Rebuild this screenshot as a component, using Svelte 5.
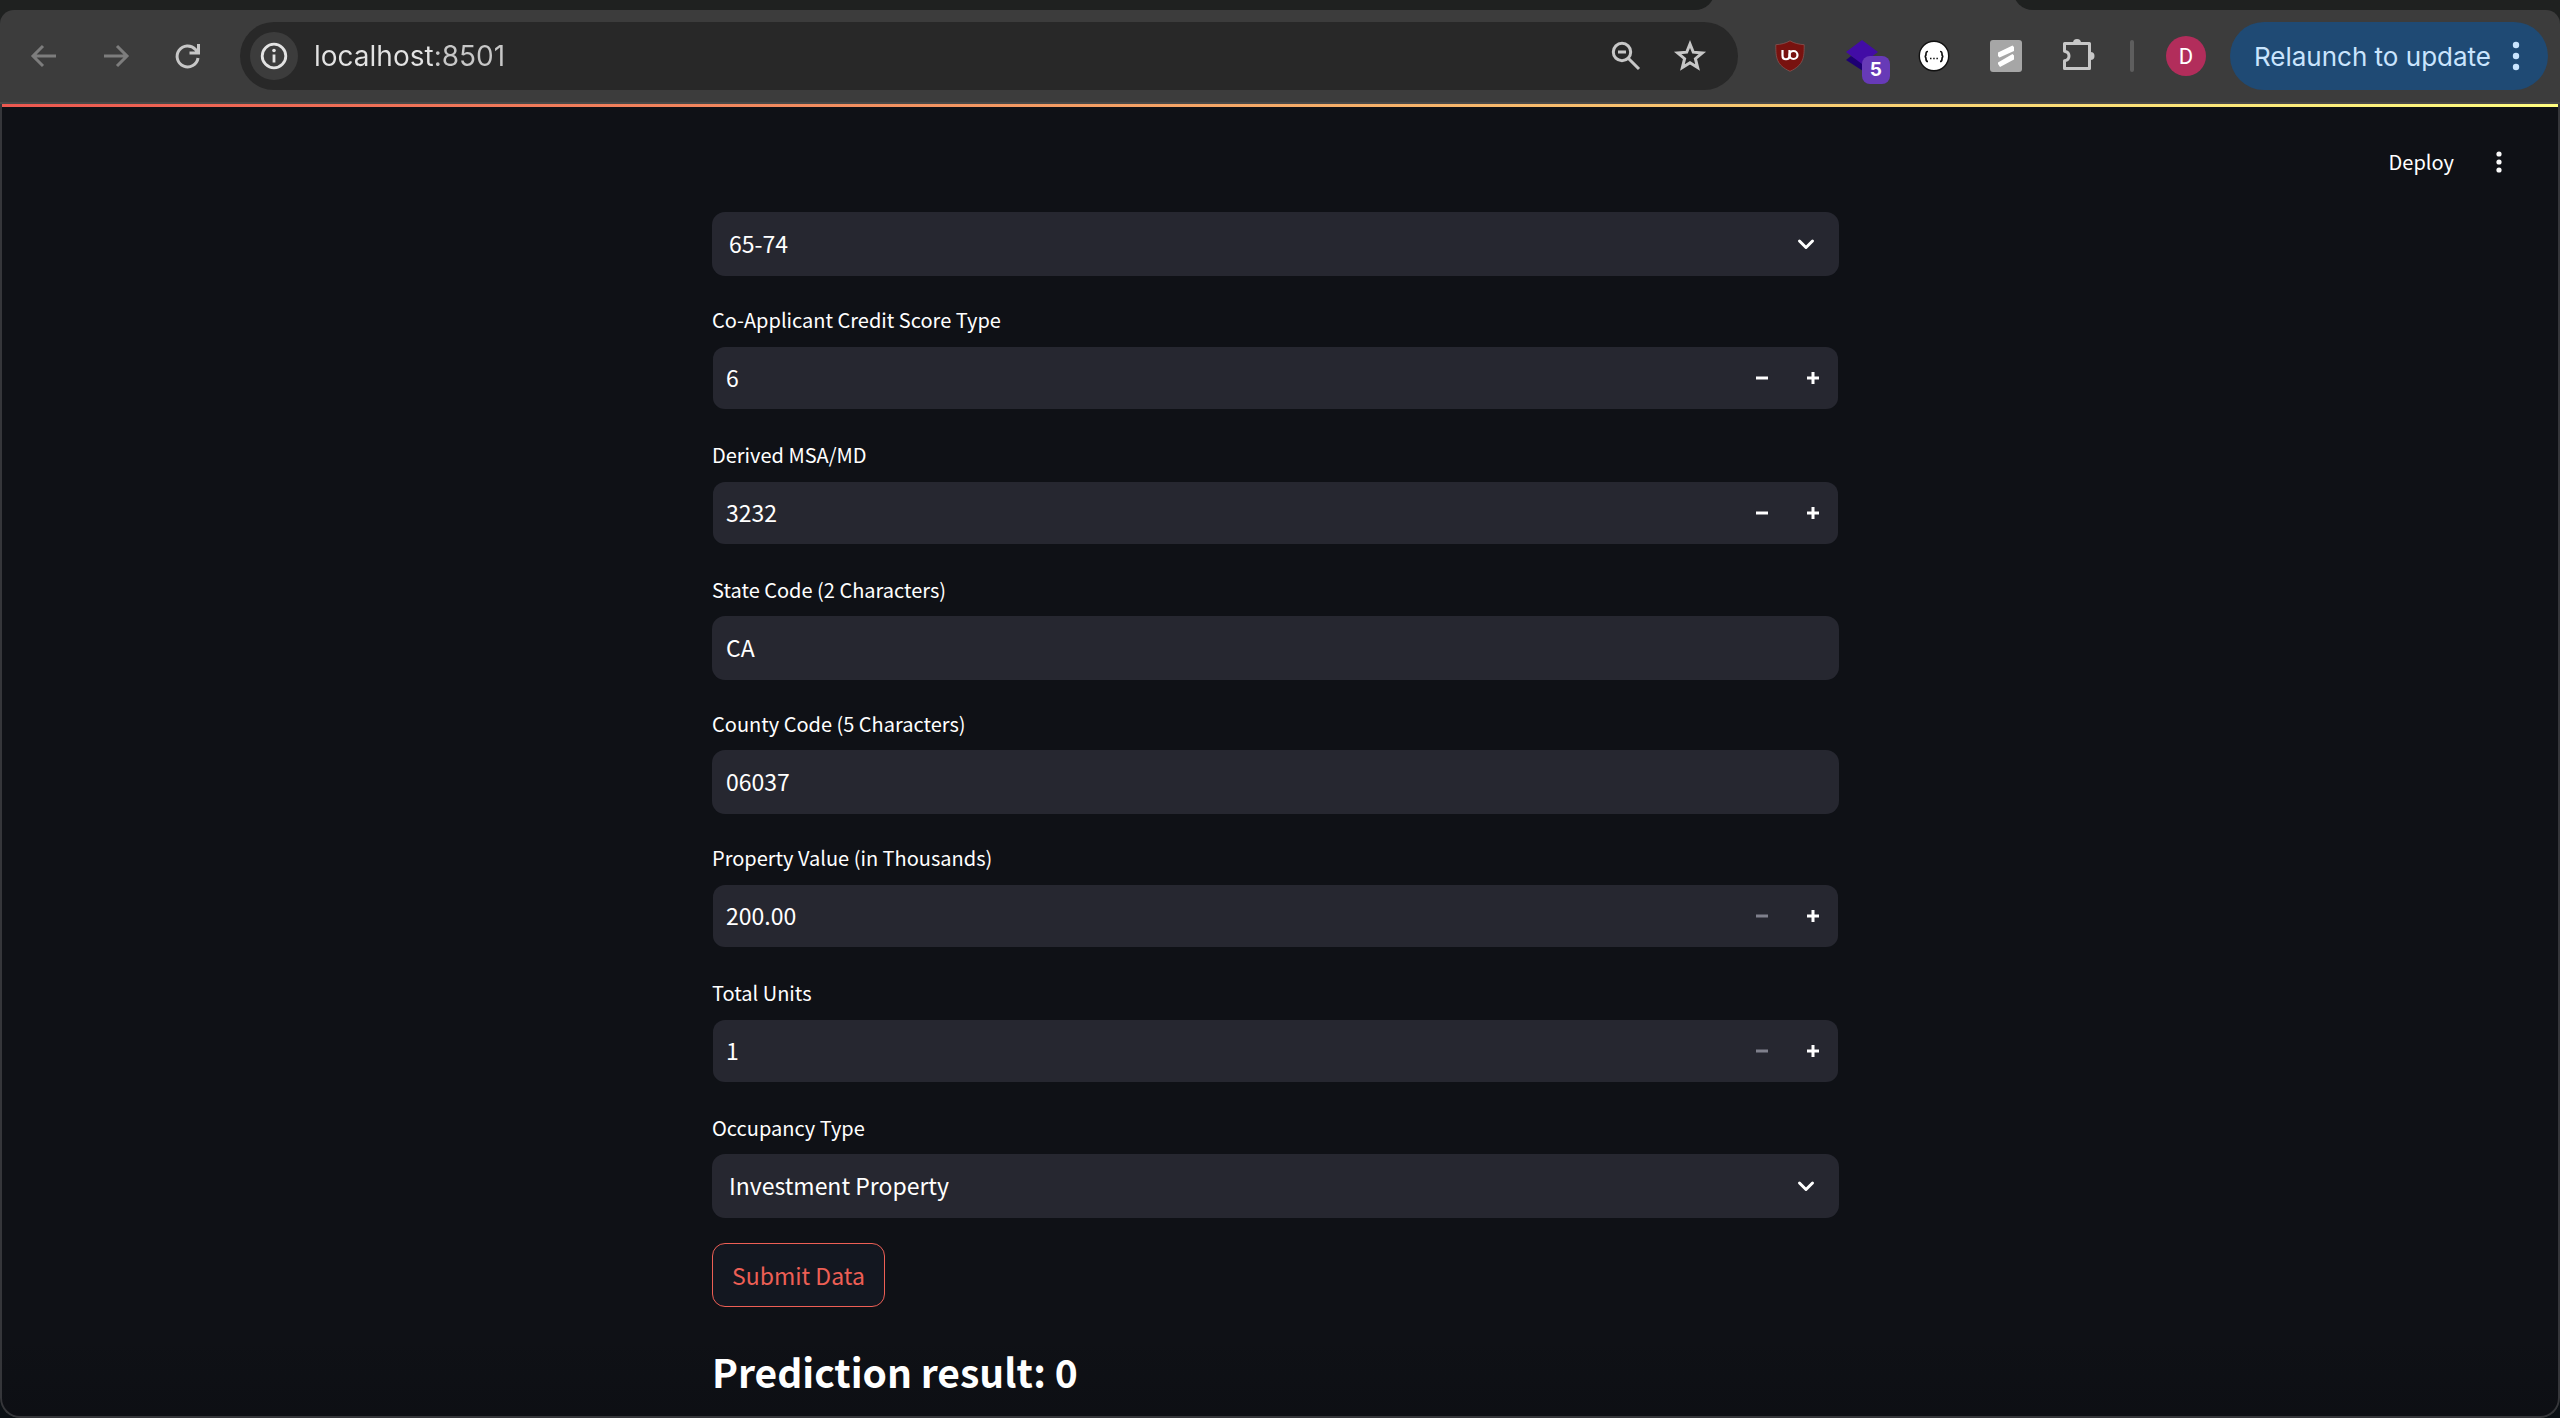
<script>
  let fields = $state([
    { id: 'credit', label: 'Co-Applicant Credit Score Type', kind: 'number', value: '6' },
    { id: 'msa', label: 'Derived MSA/MD', kind: 'number', value: '3232' },
    { id: 'state', label: 'State Code (2 Characters)', kind: 'text', value: 'CA' },
    { id: 'county', label: 'County Code (5 Characters)', kind: 'text', value: '06037' },
    { id: 'property', label: 'Property Value (in Thousands)', kind: 'number', value: '200.00', atMin: true },
    { id: 'units', label: 'Total Units', kind: 'number', value: '1', atMin: true },
    { id: 'occupancy', label: 'Occupancy Type', kind: 'select', value: 'Investment Property' }
  ]);
  let address = $state('localhost:8501');
</script>

{#snippet dropdown(id, value)}
  <div class="box select-box">
    <select {id} aria-label={id === 'age' ? 'Co-Applicant Age' : undefined}>
      <option>{value}</option>
    </select>
    <svg class="chevron" viewBox="0 0 24 24" aria-hidden="true"><path d="M5.5 9 12 15.500l6.500-6.500" /></svg>
  </div>
{/snippet}

<div class="window">
  <div class="tabs">
    <div class="tab-side before"></div>
    <div class="tab-gap"></div>
    <div class="tab-side after"></div>
  </div>

  <nav class="toolbar" aria-label="Browser">
    <div class="history">
      <button class="icon dim" aria-label="Back" disabled>
        <svg viewBox="0 0 32 32"><path d="M28 16H6M15 6 5 16l10 10" /></svg>
      </button>
      <button class="icon dim" aria-label="Forward" disabled>
        <svg viewBox="0 0 32 32"><path d="M4 16h22M17 6l10 10-10 10" /></svg>
      </button>
      <button class="icon" aria-label="Reload">
        <svg viewBox="0 0 32 32"><path d="M26 18a10.500 10.500 0 1 1-2.500-8.500l2 2.500M26.500 4v9h-9" /></svg>
      </button>
    </div>

    <div class="address">
      <button class="info" aria-label="Site information">
        <svg viewBox="0 0 32 32"><circle cx="16" cy="16" r="11.800" /><path d="M16 14.500v8" /><circle class="dot" cx="16" cy="10.500" r="1.800" /></svg>
      </button>
      <input class="url" type="text" aria-label="Address" bind:value={address} />
      <button class="icon" aria-label="Zoom out">
        <svg viewBox="0 0 32 32"><circle cx="12" cy="12" r="8.700" /><path d="M8 12h8M18.500 18.500 29 29" /></svg>
      </button>
      <button class="icon" aria-label="Bookmark this tab">
        <svg viewBox="0 0 32 32"><path d="m16 4 3.300 8.200 9 .7-6.900 5.800 2.200 8.800L16 22.700l-7.600 4.800 2.200-8.800-6.900-5.800 9-.7z" /></svg>
      </button>
    </div>

    <div class="extensions">
      <button class="icon" aria-label="uBlock Origin">
        <svg class="art" viewBox="0 0 32 32">
          <path d="M16 .8C12 3.200 7 4.400 1.800 4.700c0 13 .5 20.300 14.200 26.600 13.700-6.300 14.200-13.600 14.200-26.600C25 4.400 20 3.200 16 .8z" fill="#78120f" stroke="#8b5a59" stroke-width=".7" />
          <path d="M8.500 10v5.500c0 5 7 5 7 0V10" fill="none" stroke="#fff" stroke-width="2.200" />
          <circle cx="19.500" cy="15" r="4" fill="none" stroke="#fff" stroke-width="2.200" />
        </svg>
      </button>
      <button class="icon layered" aria-label="Layers, 5 items">
        <svg class="art" viewBox="0 0 32 32">
          <path d="m0 20 5-4 12 7v8z" fill="#1d0072" />
          <path d="M16 0 32 12 16 24 0 12z" fill="#420ca6" />
        </svg>
        <span class="badge">5</span>
      </button>
      <button class="icon" aria-label="JSON viewer">
        <svg class="art" viewBox="0 0 32 32">
          <circle cx="16" cy="16" r="14.700" fill="#fff" stroke="#111" stroke-width="1.400" />
          <path d="M10 11.500c-2 0-2 .8-2 2.500s-.3 2.500-1.500 2.500c1.200 0 1.500 1 1.500 2.500s0 2.500 2 2.500M22 11.500c2 0 2 .8 2 2.500s.3 2.500 1.500 2.500c-1.200 0-1.500 1-1.500 2.500s0 2.500-2 2.500" fill="none" stroke="#111" stroke-width="1.700" />
          <path d="M12 18.500h1.500M15.200 18.500h1.500M18.400 18.500h1.500" stroke="#111" stroke-width="1.500" />
        </svg>
      </button>
      <button class="icon" aria-label="Scribe">
        <svg class="art" viewBox="0 0 32 32">
          <rect width="32" height="32" rx="3" fill="#a6a6a6" />
          <path d="M8 12.500 22.500 5.500 24 7v4L9.500 17.500 8 16zM8 22.500 22.500 14 24 15.500v4L10 27l-2-3z" fill="#fff" />
        </svg>
      </button>
      <button class="icon" aria-label="Extensions">
        <svg class="puzzle" viewBox="-1 0 32 32">
          <path d="M1.500 3.500h25v25h-25v-7.700c6-1 6-8.600 0-9.600z" />
          <path class="knob" d="M10 3a4 4 0 0 1 8 0zM27.500 12a4 4 0 0 1 0 8z" />
        </svg>
      </button>
    </div>
    <span class="divider"></span>
    <button class="avatar" aria-label="Profile">D</button>
    <button class="relaunch">
      Relaunch to update
      <svg viewBox="0 0 8 32" aria-hidden="true"><circle cx="4" cy="5" r="3.200" /><circle cx="4" cy="16" r="3.200" /><circle cx="4" cy="27" r="3.200" /></svg>
    </button>
  </nav>

  <div class="page">
    <header>
      <button class="deploy">Deploy</button>
      <button class="menu" aria-label="Main menu">
        <svg viewBox="0 0 8 24" aria-hidden="true"><circle cx="4" cy="4" r="2.600" /><circle cx="4" cy="12" r="2.600" /><circle cx="4" cy="20" r="2.600" /></svg>
      </button>
    </header>

    <div class="scroller">
      <main>
        <form onsubmit={(e) => e.preventDefault()}>
          {@render dropdown('age', '65-74')}
          {#each fields as field (field.id)}
            <div class="field">
              <label class="caption" for={field.id}>{field.label}</label>
              {#if field.kind === 'select'}
                {@render dropdown(field.id, field.value)}
              {:else if field.kind === 'text'}
                <div class="box">
                  <input id={field.id} type="text" bind:value={field.value} />
                </div>
              {:else}
                <div class="box number">
                  <input id={field.id} type="text" inputmode="decimal" bind:value={field.value} />
                  <button type="button" class="step" aria-label="Decrease {field.label}" disabled={field.atMin}>
                    <svg viewBox="0 0 16 16"><path d="M2 8h12" /></svg>
                  </button>
                  <button type="button" class="step" aria-label="Increase {field.label}">
                    <svg viewBox="0 0 16 16"><path d="M2 8h12M8 2v12" /></svg>
                  </button>
                </div>
              {/if}
            </div>
          {/each}
          <button class="submit">Submit Data</button>
        </form>
        <h2>Prediction result: 0</h2>
      </main>
    </div>
  </div>
</div>

<style>
  :global(body) {
    margin: 0;
    background: #0b1015;
  }
  * {
    box-sizing: border-box;
  }
  button,
  input,
  select {
    margin: 0;
    padding: 0;
    border: 0;
    background: none;
    color: inherit;
    font: inherit;
    outline: none;
  }
  svg {
    display: block;
    overflow: visible;
  }
  .window {
    display: flex;
    flex-direction: column;
    min-height: 100vh;
    overflow: hidden;
    background: #1f2120;
    border-radius: 0 0 20px 20px;
    font-family: Inter, 'Liberation Sans', sans-serif;
  }

  .tabs {
    display: flex;
    align-items: flex-end;
    height: 10px;
    overflow: hidden;
    background: #3c3c3c;
  }
  .tab-side {
    height: 20px;
    background: #1f2120;
  }
  .before {
    flex: 1;
    border-bottom-right-radius: 20px;
  }
  .tab-gap {
    width: 298px;
  }
  .after {
    width: 547px;
    border-bottom-left-radius: 20px;
  }

  .toolbar {
    display: flex;
    align-items: center;
    height: 94px;
    padding: 0 12px 0 28px;
    background: #3c3c3c;
    border-bottom: 2px solid #484848;
    border-radius: 14px 14px 0 0;
  }
  .icon {
    flex: none;
    width: 32px;
    height: 32px;
  }
  .icon svg {
    width: 32px;
    height: 32px;
    fill: none;
    stroke: #c7c7c7;
    stroke-width: 3;
  }
  .icon .art {
    stroke: none;
  }
  .icon.dim svg {
    stroke: #7d7d7d;
  }
  .history {
    display: flex;
    gap: 40px;
  }
  .address {
    display: flex;
    flex: 1;
    align-items: center;
    gap: 32px;
    height: 68px;
    margin-left: 36px;
    padding: 0 32px 0 10px;
    border-radius: 34px;
    background: #282828;
  }
  .info {
    display: grid;
    place-items: center;
    width: 48px;
    height: 48px;
    border-radius: 50%;
    background: #3c3c3c;
  }
  .info svg {
    width: 32px;
    height: 32px;
    fill: none;
    stroke: #e3e3e3;
    stroke-width: 2.800;
  }
  .info .dot {
    fill: #e3e3e3;
    stroke: none;
  }
  .url {
    flex: 1;
    min-width: 0;
    margin-left: -16px;
    /* host is brighter than the port */
    background: linear-gradient(90deg, #e3e3e3 120px, #c7c7c7 120px);
    background-clip: text;
    color: transparent;
    caret-color: #e3e3e3;
    font-size: 28px;
  }
  .extensions {
    display: flex;
    gap: 40px;
    margin-left: 36px;
  }
  .layered {
    position: relative;
  }
  .badge {
    position: absolute;
    top: 16px;
    left: 16px;
    width: 28px;
    height: 28px;
    border-radius: 8px;
    background: #673ab7;
    color: #fff;
    font-size: 19px;
    font-weight: 700;
    line-height: 28px;
    text-align: center;
  }
  .icon .puzzle {
    stroke-linejoin: round;
  }
  .icon .knob {
    fill: #c7c7c7;
    stroke: none;
  }
  .divider {
    width: 4px;
    height: 32px;
    margin: 0 32px 0 36px;
    border-radius: 2px;
    background: #5e5e5e;
  }
  .avatar {
    width: 40px;
    height: 40px;
    border-radius: 50%;
    background: #b22d5b;
    color: #fff;
    font-family: Roboto, sans-serif;
    font-size: 22px;
  }
  .relaunch {
    display: flex;
    align-items: center;
    gap: 21px;
    height: 68px;
    margin-left: 24px;
    padding: 0 28px 0 24px;
    border-radius: 34px;
    background: #1f4a74;
    color: #c9e4fd;
    font-size: 26px;
    white-space: nowrap;
  }
  .relaunch svg {
    width: 8px;
    height: 32px;
    fill: #c9e4fd;
  }

  .page {
    flex: 1;
    border: 2px solid #35363a;
    border-top: 0;
    border-radius: 0 0 20px 20px;
    background: linear-gradient(transparent calc(100% - 80px), rgb(8 9 14 / 25%)), #0f1116;
    color: #fff;
    font-family: 'Noto Sans CJK SC', 'Open Sans', sans-serif;
    font-size: 23px;
    font-weight: 400;
  }
  .page::before {
    display: block;
    height: 3px;
    background: linear-gradient(90deg, #ec5850, #fffd80);
    content: '';
  }
  header {
    display: flex;
    align-items: center;
    justify-content: flex-end;
    gap: 41px;
    height: 105px;
    padding: 4px 55px 0 0;
  }
  .deploy {
    font-size: 20px;
  }
  .menu svg {
    width: 8px;
    height: 24px;
    fill: #fafafa;
  }
  .scroller {
    padding-right: 9px;
  }
  main {
    max-width: 1127px;
    margin: 0 auto;
  }
  form {
    display: flex;
    flex-direction: column;
    align-items: stretch;
    gap: 25px;
  }
  .caption {
    display: flex;
    align-items: center;
    height: 36px;
    margin-bottom: 9px;
    font-size: 20px;
  }
  .box {
    display: flex;
    height: 64px;
    border-radius: 13px;
    background: #262730;
  }
  .box input {
    flex: 1;
    min-width: 0;
    padding: 0 14px 2px;
  }
  .number {
    height: 65px;
    border: 1px solid transparent;
    border-bottom-width: 2px;
    background-clip: padding-box;
  }
  .number input {
    padding: 0 13px 2px;
  }
  .step {
    display: grid;
    place-items: center;
    width: 51px;
  }
  .step svg {
    width: 16px;
    height: 16px;
    stroke: #fff;
    stroke-width: 3;
  }
  .step:disabled svg {
    stroke: #7f808c;
  }
  .select-box {
    display: grid;
    align-items: center;
  }
  .select-box select,
  .chevron {
    grid-area: 1 / 1;
  }
  .select-box select {
    width: 100%;
    height: 64px;
    padding: 0 17px 2px;
    appearance: none;
  }
  .chevron {
    justify-self: end;
    width: 24px;
    height: 24px;
    margin-right: 21px;
    fill: none;
    stroke: #fff;
    stroke-linecap: round;
    stroke-linejoin: round;
    stroke-width: 3;
    pointer-events: none;
  }
  .submit {
    align-self: flex-start;
    height: 64px;
    padding: 0 19px;
    border: 1px solid #ed5f55;
    border-radius: 13px;
    background: #131720;
    color: #ed5f55;
  }
  h2 {
    margin: 0;
    padding: 34px 0 12px;
    font-size: 39px;
    font-weight: 700;
    line-height: 60px;
  }
</style>
